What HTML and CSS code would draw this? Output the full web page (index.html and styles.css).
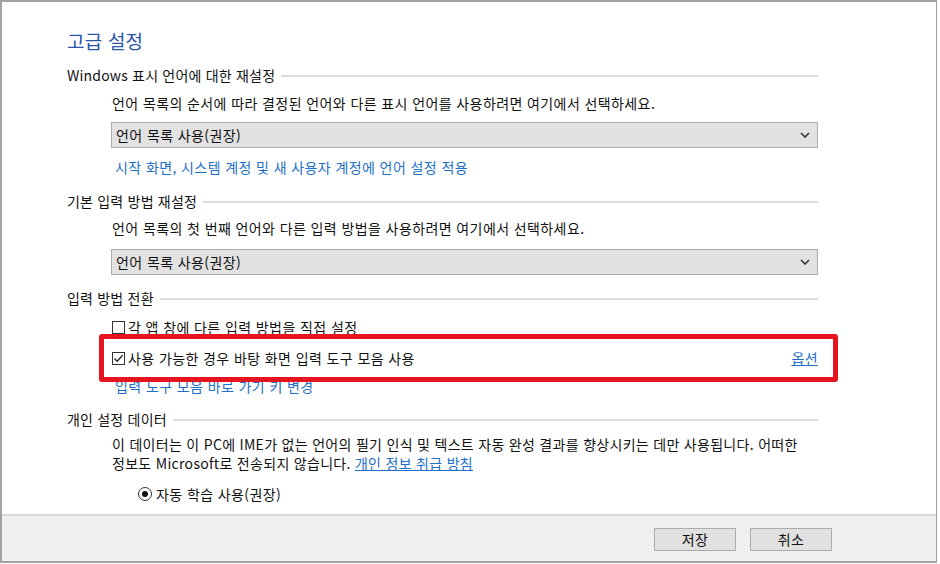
FILE: index.html
```html
<!DOCTYPE html>
<html lang="ko">
<head>
<meta charset="utf-8">
<link rel="stylesheet" href="styles.css">
</head>
<body>
<div class="frame">
  <div class="content">
    <div class="title">고급 설정</div>

    <div class="group-head h1"><span>Windows 표시 언어에 대한 재설정</span><i class="rule"></i></div>
    <div class="indent">
      <div class="desc d1">언어 목록의 순서에 따라 결정된 언어와 다른 표시 언어를 사용하려면 여기에서 선택하세요.</div>
      <div class="select s1"><span>언어 목록 사용(권장)</span>
        <svg class="chev" width="10" height="6" viewBox="0 0 10 6"><path d="M1 1 L5 5 L9 1" fill="none" stroke="#333" stroke-width="1.6"/></svg>
      </div>
      <a class="link l1">시작 화면, 시스템 계정 및 새 사용자 계정에 언어 설정 적용</a>
    </div>

    <div class="group-head h2"><span>기본 입력 방법 재설정</span><i class="rule"></i></div>
    <div class="indent">
      <div class="desc d2">언어 목록의 첫 번째 언어와 다른 입력 방법을 사용하려면 여기에서 선택하세요.</div>
      <div class="select s2"><span>언어 목록 사용(권장)</span>
        <svg class="chev" width="10" height="6" viewBox="0 0 10 6"><path d="M1 1 L5 5 L9 1" fill="none" stroke="#333" stroke-width="1.6"/></svg>
      </div>
    </div>

    <div class="group-head h3"><span>입력 방법 전환</span><i class="rule"></i></div>
    <div class="indent">
      <div class="check c1"><span class="box"></span><span>각 앱 창에 다른 입력 방법을 직접 설정</span></div>
      <div class="check c2">
        <span class="box"><svg width="11" height="11" viewBox="0 0 11 11"><path d="M1.5 5.5 L4.2 8.3 L9.6 2.2" fill="none" stroke="#222" stroke-width="1.3"/></svg></span>
        <span>사용 가능한 경우 바탕 화면 입력 도구 모음 사용</span>
        <a class="opt">옵션</a>
      </div>
      <a class="link l3">입력 도구 모음 바로 가기 키 변경</a>
    </div>

    <div class="group-head h4"><span>개인 설정 데이터</span><i class="rule"></i></div>
    <div class="indent">
      <div class="para">
        <div class="pline">이 데이터는 이 PC에 IME가 없는 언어의 필기 인식 및 텍스트 자동 완성 결과를 향상시키는 데만 사용됩니다. 어떠한</div>
        <div class="pline">정보도 Microsoft로 전송되지 않습니다. <a class="ulink">개인 정보 취급 방침</a></div>
      </div>
      <div class="radio"><span class="dot"></span><span>자동 학습 사용(권장)</span></div>
    </div>
  </div>

  <div class="footer">
    <button class="btn">저장</button>
    <button class="btn">취소</button>
  </div>

  <div class="highlight"></div>
</div>
</body>
</html>
```

FILE: styles.css
```css
* { box-sizing: border-box; }
html, body { margin: 0; padding: 0; background: #fff; }
body {
  font-family: "Noto Sans CJK KR", "Noto Sans", sans-serif;
  font-size: 14px;
  letter-spacing: 0.4px;
  color: #111;
}
.frame {
  position: relative;
  width: 937px;
  height: 563px;
  border: 2px solid #a3a3a3;
  border-right-width: 1px;
  display: flex;
  flex-direction: column;
  background: #fff;
}
.content {
  flex: 1;
  padding: 27px 118px 0 65px;
}
.title {
  font-size: 19px;
  line-height: 24px;
  height: 24px;
  color: #2c55a6;
  letter-spacing: 0.2px;
}
.group-head {
  display: flex;
  align-items: center;
  line-height: 20px;
  height: 20px;
  letter-spacing: 0.2px;
}
.group-head .rule {
  flex: 1;
  height: 2px;
  background: #dcdcdc;
  margin-left: 6px;
  margin-top: 2px;
}
.h1 { margin-top: 12px; }
.h2 { margin-top: 14px; }
.h3 { margin-top: 13px; }
.h4 { margin-top: 13px; }
.indent { padding-left: 45px; }
.desc { line-height: 20px; height: 20px; white-space: nowrap; }
.d1 { margin-top: 8px; }
.d2 { margin-top: 7px; }
.select {
  height: 26px;
  background: #e2e2e2;
  border: 1px solid #adadad;
  display: flex;
  align-items: center;
  justify-content: space-between;
  padding: 0 7px 0 4px;
  margin-left: -1px;
}
.s1 { margin-top: 9px; }
.s2 { margin-top: 11px; }
.link {
  display: block;
  color: #1e6fc8;
  line-height: 20px;
  height: 20px;
  padding-left: 3px;
}
.l1 { margin-top: 9px; }
.l3 { margin-top: 8px; }
.check {
  display: flex;
  align-items: center;
  line-height: 20px;
  height: 20px;
}
.c1 { margin-top: 9px; }
.c2 { margin-top: 11px; }
.box {
  width: 13px;
  height: 13px;
  border: 1px solid #333;
  background: #fff;
  margin-right: 3px;
  display: flex;
  align-items: center;
  justify-content: center;
  flex: none;
}
.opt {
  margin-left: auto;
  color: #1e6fc8;
  text-decoration: underline;
}
.para {
  margin-top: 6px;
  letter-spacing: 0.3px;
  display: flex;
  flex-direction: column;
  gap: 0;
}
.pline {
  line-height: 19px;
  height: 19px;
  white-space: nowrap;
}
.ulink { color: #1e6fc8; text-decoration: underline; }
.radio {
  display: flex;
  align-items: center;
  margin-top: 11px;
  margin-left: 26px;
  line-height: 20px;
  height: 20px;
}
.dot {
  width: 14px;
  height: 14px;
  border: 1px solid #333;
  border-radius: 50%;
  margin-right: 4px;
  display: flex;
  align-items: center;
  justify-content: center;
  background: #fff;
}
.dot::after {
  content: "";
  width: 6px;
  height: 6px;
  border-radius: 50%;
  background: #111;
}
.footer {
  height: 47px;
  border-top: 2px solid #dadada;
  background: #f0f0f0;
  display: flex;
  align-items: center;
  justify-content: flex-end;
  gap: 14px;
  padding: 1px 104px 0 0;
}
.btn {
  width: 82px;
  height: 23px;
  background: #e1e1e1;
  border: 1px solid #adadad;
  font-family: inherit;
  font-size: 14px;
  letter-spacing: 0.4px;
  color: #111;
  padding: 0;
}
.highlight {
  position: absolute;
  left: 97px;
  top: 332px;
  width: 739px;
  height: 48px;
  border: 5px solid #e5141e;
  border-radius: 3px;
  pointer-events: none;
}
```
